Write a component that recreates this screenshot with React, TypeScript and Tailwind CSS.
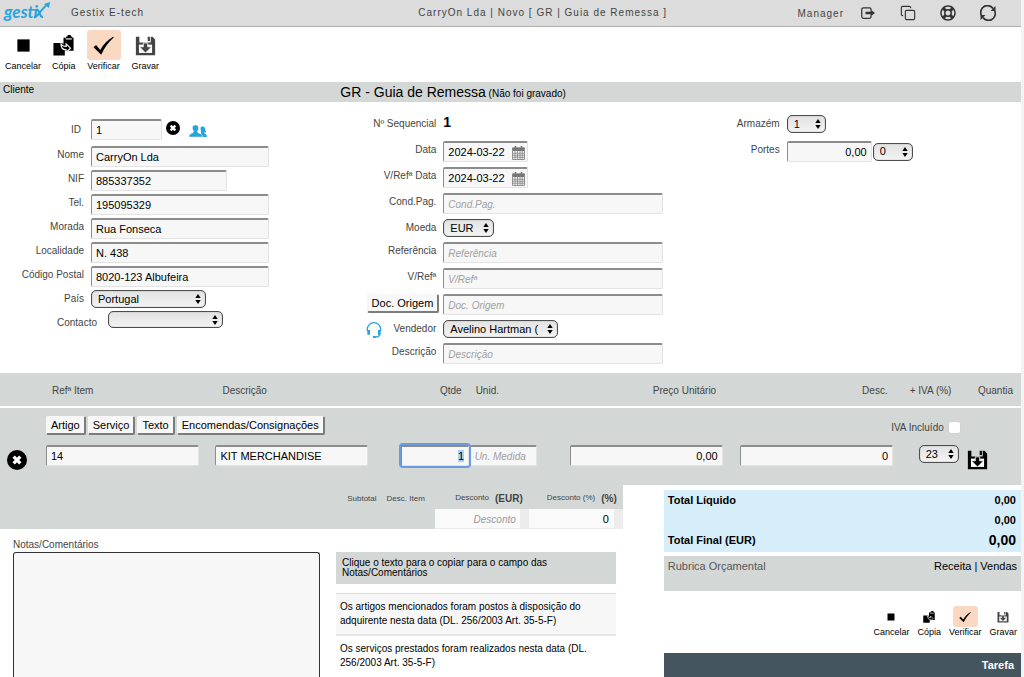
import React from "react";
import { Copy } from "lucide-react";
import { FaRegLifeRing } from "react-icons/fa";

const FIELD =
  "h-[21px] rounded-xs border border-t-2 border-t-[#8c8c8c] border-l-[#8c8c8c] border-r-[#e3e3e3] border-b-[#e3e3e3] bg-[#f7f7f7] px-1 text-[11px] text-black outline-none placeholder:text-[10px] placeholder:italic placeholder:text-[#a0a0a0] focus:ring-2 focus:ring-[#6a9be0] selection:bg-[#a9d0f8] selection:text-black";

const RAISED =
  "rounded-xs border border-r-2 border-b-2 border-t-[#f7f7f7] border-l-[#f7f7f7] border-r-[#7c7c7c] border-b-[#7c7c7c] bg-[#f7f7f7] text-[11px] leading-4 text-black whitespace-nowrap";

function StopIcon() {
  return (
    <svg viewBox="0 0 24 24" className="size-full">
      <rect x="5" y="5" width="14" height="14" fill="#000" />
    </svg>
  );
}

function PasteIcon() {
  return (
    <svg viewBox="0 0 24 24" className="size-full">
      <path d="M12 3h3V1.600h1.500a2 2 0 0 1 4 0H22V3h1.500v15H12z" fill="#000" />
      <path d="M14.500 4.500h7" stroke="#fff" strokeWidth="1.300" />
      <path d="M.5 9h10l3 3v11.500H.5z" fill="#000" />
      <path d="M9 9.500c1 3 3 3.500 6 3.500v-3l5 5-5 5v-3c-4 0-6-2-6-7.500z" fill="#000" stroke="#fff" strokeWidth="1.300" />
    </svg>
  );
}

function CheckIcon() {
  return (
    <svg viewBox="0 0 24 24" className="size-full">
      <path d="M.5 14 3.500 11.500 8.300 17C12 10.500 17 5.500 23 2l.7.900C17.500 8.500 13 14.500 9.400 22.500z" fill="#000" />
    </svg>
  );
}

function SaveIcon({ color }: { color: string }) {
  return (
    <svg viewBox="0 0 24 24" className="size-full">
      <path d="M1 2h4v6.500h13V2h2l3 3v18H1z" fill={color} />
      <path d="M14.500 2h2.500v5h-2.500z" fill={color} />
      <path d="M4.500 11h15v9.500h-15z" fill="#fff" />
      <path d="M9.500 9h5v4.500h4.500l-7 7-7-7h4.500z" fill={color} stroke="#fff" strokeWidth="0.900" />
    </svg>
  );
}

function RemoveIcon({ size }: { size: string }) {
  return (
    <svg viewBox="0 0 24 24" className={size}>
      <circle cx="12" cy="12" r="12" fill="#000" />
      <path d="m8 8 8 8m0-8-8 8" stroke="#fff" strokeWidth="4" />
    </svg>
  );
}

function ClientsIcon() {
  return (
    <svg viewBox="0 0 36 24" className="h-3 w-[18px]" fill="#29a3dc">
      <path d="M23 6c1-4 8-4 9 1 0 3 2 4 2 7-1 1-3 1-4 1.500 0 1.500 6 2 6 8.500H25z" />
      <path d="M13 0c5 0 6.500 3 6 7-.3 3-2 4.500-2 6.500C17 17 27 16 27 24H0c0-8 9-7 9-10.500 0-2-1.700-3.500-2-6.500C6.500 3 8 0 13 0z" stroke="#fff" strokeWidth="0.800" />
    </svg>
  );
}

function HeadsetIcon() {
  return (
    <svg viewBox="0 0 24 24" className="size-4" fill="none" stroke="#29a3dc" strokeWidth="2">
      <path d="M2 14v-3a10 10 0 0 1 20 0v3" />
      <path d="M4 12v7M20 12v7" strokeWidth="4" />
      <path d="M20.500 18c0 3-3 4.500-7 4.500" />
      <path d="M10.500 22.500h4" strokeWidth="3" />
    </svg>
  );
}

function CalendarIcon() {
  return (
    <svg viewBox="0 0 26 28" className="h-[14px] w-[13px]">
      <path d="M1 4h24v23H1z" fill="#eee" stroke="#777" strokeWidth="1.500" />
      <path d="M1 3h24v7H1z" fill="#777" />
      <path d="M7 0v5M19 0v5" stroke="#777" strokeWidth="3" />
      <path d="M1 14.500h24M1 18.500h24M1 22.500h24M6 10v17M11 10v17M16 10v17M20.500 10v17" stroke="#777" strokeWidth="1.300" />
    </svg>
  );
}

function ExitIcon() {
  return (
    <svg viewBox="0 0 28 24" className="h-3 w-[14px]" fill="none" stroke="#333" strokeWidth="2.500">
      <path d="M20 6V4.500A3 3 0 0 0 17 1.500H5A3.500 3.500 0 0 0 1.500 5v14A3.500 3.500 0 0 0 5 22.500h12a3 3 0 0 0 3-3V18" />
      <path d="M9 12h12" strokeWidth="5" />
      <path d="m19 5 9 7-9 7z" fill="#333" stroke="none" />
    </svg>
  );
}

function RefreshIcon() {
  return (
    <svg viewBox="0 0 32 32" className="size-4" fill="none" stroke="#333" strokeWidth="3.500">
      <path d="M2.500 20A13.500 13.500 0 0 1 26 7M29.500 12A13.500 13.500 0 0 1 6 25" />
      <path d="M31 2v10H21zM1 30V20h10z" fill="#333" stroke="none" />
    </svg>
  );
}

function Select({ id, options, size, label }: { id: string; options: string[]; size: string; label?: string }) {
  return (
    <span className={`relative inline-block ${size}`}>
      <select
        id={id}
        aria-label={label}
        className="block size-full appearance-none rounded-[5px] border border-[#4d4d4d] bg-linear-to-b from-[#e2e2e2] to-[#f3f3f3] pr-4 pl-[6px] text-[11px] leading-none text-black shadow-[inset_0_0_1px_#666]"
      >
        {options.map((o) => (
          <option key={o}>{o}</option>
        ))}
      </select>
      <svg viewBox="0 0 6 10" className="pointer-events-none absolute top-1 right-[5px] h-[10px] w-[6px]">
        <path d="M3 0l2.700 4H.3zM3 10L.3 6h5.400z" fill="#000" />
      </svg>
    </span>
  );
}

function Row({ id, label, labelWidth, height, children }: { id: string; label: string; labelWidth: string; height: string; children: React.ReactNode }) {
  return (
    <div className={`flex items-start gap-[7px] ${height}`}>
      <label htmlFor={id} className={`shrink-0 text-right leading-[18px] text-[#444] ${labelWidth}`}>
        {label}
      </label>
      {children}
    </div>
  );
}

function Toolbar({ small }: { small?: boolean }) {
  const actions = [
    { name: "Cancelar", icon: <StopIcon /> },
    { name: "Cópia", icon: <PasteIcon /> },
    { name: "Verificar", icon: <CheckIcon />, active: true },
    { name: "Gravar", icon: <SaveIcon color="#444" /> },
  ];

  return (
    <div className={small ? "flex justify-end gap-2 pr-1" : "flex gap-[11px] pl-[5px]"}>
      {actions.map((a) => (
        <button key={a.name} type="button" className="flex flex-col items-center text-[9px] leading-3 text-black">
          <span
            className={`flex items-center justify-center rounded-[3px] ${small ? "h-[21px]" : "h-[30px]"} ${a.active ? (small ? "w-[25px] bg-[#fbd8c2]" : "w-[34px] bg-[#fbd8c2]") : ""}`}
          >
            <span className={small ? "size-3" : "size-[21px]"}>{a.icon}</span>
          </span>
          <span className={small ? "leading-[10px]" : ""}>{a.name}</span>
        </button>
      ))}
    </div>
  );
}

const CLIENT_FIELDS = [
  { id: "nome", label: "Nome", value: "CarryOn Lda", width: "w-[178px]" },
  { id: "nif", label: "NIF", value: "885337352", width: "w-[136px]" },
  { id: "tel", label: "Tel.", value: "195095329", width: "w-[178px]" },
  { id: "morada", label: "Morada", value: "Rua Fonseca", width: "w-[178px]" },
  { id: "localidade", label: "Localidade", value: "N. 438", width: "w-[178px]" },
  { id: "postal", label: "Código Postal", value: "8020-123 Albufeira", width: "w-[178px]" },
];

function ClientForm() {
  return (
    <div className="pt-[17px]">
      <div className="flex h-[27px] items-start gap-[7px]">
        <label htmlFor="id" className="w-[81px] shrink-0 pt-[2px] text-right leading-[18px] text-[#444]">
          ID
        </label>
        <div className="flex items-start gap-1 pl-[3px]">
          <input id="id" defaultValue="1" className={`${FIELD} w-[71px]`} />
          <button type="button" aria-label="Limpar cliente" className="pt-[2px]">
            <RemoveIcon size="size-[14px]" />
          </button>
          <button type="button" aria-label="Procurar cliente" className="pt-[6px] pl-[5px]">
            <ClientsIcon />
          </button>
        </div>
      </div>
      {CLIENT_FIELDS.map((f) => (
        <Row key={f.id} id={f.id} label={f.label} labelWidth="w-[84px]" height="h-6">
          <input id={f.id} defaultValue={f.value} className={`${FIELD} ${f.width}`} />
        </Row>
      ))}
      <Row id="pais" label="País" labelWidth="w-[84px]" height="h-[21px]">
        <Select id="pais" options={["Portugal"]} size="h-[18px] w-[115px]" />
      </Row>
      <div className="flex items-start gap-[11px]">
        <label htmlFor="contacto" className="w-[97px] pt-[3px] text-right leading-[18px] text-[#444]">
          Contacto
        </label>
        <Select id="contacto" options={[""]} size="h-[17px] w-[115px]" />
      </div>
    </div>
  );
}

function DateField({ id }: { id: string }) {
  return (
    <span className="relative">
      <input id={id} defaultValue="2024-03-22" className={`${FIELD} w-[85px]`} />
      <button type="button" aria-label="Abrir calendário" className="absolute top-[5px] right-[3px]">
        <CalendarIcon />
      </button>
    </span>
  );
}

function DocumentForm() {
  return (
    <div className="pt-3">
      <div className="flex h-[27px] items-start gap-[7px]">
        <span className="w-24 pt-px text-right leading-[18px] text-[#444]">Nº Sequencial</span>
        <strong className="text-sm leading-4">1</strong>
      </div>
      <Row id="data" label="Data" labelWidth="w-24" height="h-[26px]">
        <DateField id="data" />
      </Row>
      <Row id="refdata" label="V/Refª Data" labelWidth="w-24" height="h-[26px]">
        <DateField id="refdata" />
      </Row>
      <Row id="condpag" label="Cond.Pag." labelWidth="w-24" height="h-[26px]">
        <input id="condpag" placeholder="Cond.Pag." className={`${FIELD} w-[220px]`} />
      </Row>
      <Row id="moeda" label="Moeda" labelWidth="w-24" height="h-[23px]">
        <Select id="moeda" options={["EUR"]} size="h-[18px] w-[51px]" />
      </Row>
      <Row id="referencia" label="Referência" labelWidth="w-24" height="h-[26px]">
        <input id="referencia" placeholder="Referência" className={`${FIELD} w-[220px]`} />
      </Row>
      <Row id="vref" label="V/Refª" labelWidth="w-24" height="h-[26px]">
        <input id="vref" placeholder="V/Refª" className={`${FIELD} w-[220px]`} />
      </Row>
      <div className="flex h-[26px] items-start gap-1">
        <div className="flex w-[99px] justify-end">
          <button type="button" className={`${RAISED} px-1`}>
            Doc. Origem
          </button>
        </div>
        <input aria-label="Doc. Origem" placeholder="Doc. Origem" className={`${FIELD} w-[220px]`} />
      </div>
      <div className="flex h-[23px] items-start gap-[7px]">
        <div className="flex w-24 items-start justify-end gap-3">
          <span className="pt-[2px]">
            <HeadsetIcon />
          </span>
          <label htmlFor="vendedor" className="leading-[18px] text-[#444]">
            Vendedor
          </label>
        </div>
        <Select id="vendedor" options={["Avelino Hartman ("]} size="h-[18px] w-[115px]" />
      </div>
      <Row id="descricao" label="Descrição" labelWidth="w-24" height="h-[30px]">
        <input id="descricao" placeholder="Descrição" className={`${FIELD} w-[220px]`} />
      </Row>
    </div>
  );
}

function ShippingForm() {
  return (
    <div className="pt-[13px]">
      <Row id="armazem" label="Armazém" labelWidth="w-[99px]" height="h-[26px]">
        <Select id="armazem" options={["1"]} size="h-[18px] w-[39px]" />
      </Row>
      <Row id="portes" label="Portes" labelWidth="w-[99px]" height="h-[26px]">
        <div className="flex items-center gap-px">
          <input id="portes" defaultValue="0,00" className={`${FIELD} w-[85px] text-right`} />
          <Select id="portes-iva" label="IVA dos portes" options={["0"]} size="h-[18px] w-10" />
        </div>
      </Row>
    </div>
  );
}

function ItemsTable() {
  return (
    <table className="w-full table-fixed border-collapse bg-[#d3d8d6]">
      <colgroup>
        <col className="w-[4.5%]" />
        <col className="w-[16.6%]" />
        <col className="w-[18%]" />
        <col className="w-[6.9%]" />
        <col className="w-[9.8%]" />
        <col className="w-[16.7%]" />
        <col className="w-[16.6%]" />
        <col className="w-[5.4%]" />
        <col className="w-[5.5%]" />
      </colgroup>
      <thead>
        <tr className="h-[34px] border-b-2 border-white text-left text-[#444] [&>th]:pt-[2px] [&>th]:font-normal [&>th]:whitespace-nowrap">
          <th></th>
          <th className="pl-[6px]">Refª Item</th>
          <th className="pl-[7px]">Descrição</th>
          <th className="pr-2 text-right">Qtde</th>
          <th className="pl-[6px]">Unid.</th>
          <th className="pr-6 text-right">Preço Unitário</th>
          <th className="pr-[22px] text-right">Desc.</th>
          <th>+ IVA (%)</th>
          <th className="pr-2 text-right">Quantia</th>
        </tr>
      </thead>
      <tbody>
        <tr className="h-[38px] align-top">
          <td></td>
          <td colSpan={5} className="pt-2">
            <div className="flex gap-[2px]">
              {["Artigo", "Serviço", "Texto", "Encomendas/Consignações"].map((b) => (
                <button key={b} type="button" className={`${RAISED} px-1`}>
                  {b}
                </button>
              ))}
            </div>
          </td>
          <td colSpan={2} className="pt-3 pr-1">
            <label className="flex items-center justify-end gap-1 leading-[15px] text-[#444]">
              IVA Incluído
              <input type="checkbox" className="size-[13px] appearance-none rounded-[3px] border border-[#d0d0d0] bg-white" />
            </label>
          </td>
          <td></td>
        </tr>
        <tr className="h-10 align-top">
          <td className="pt-[5px] pl-[7px]">
            <button type="button" aria-label="Remover linha" className="block">
              <RemoveIcon size="size-5" />
            </button>
          </td>
          <td>
            <input aria-label="Refª Item" defaultValue="14" className={`${FIELD} w-[153px]`} />
          </td>
          <td>
            <input aria-label="Descrição" defaultValue="KIT MERCHANDISE" className={`${FIELD} w-[153px]`} />
          </td>
          <td className="pl-[2px]">
            <input
              aria-label="Qtde"
              defaultValue="1"
              autoFocus
              onFocus={(e) => e.currentTarget.select()}
              className={`${FIELD} relative w-[68px] text-right`}
            />
          </td>
          <td>
            <input aria-label="Unid." placeholder="Un. Medida" className={`${FIELD} w-[67px]`} />
          </td>
          <td>
            <input aria-label="Preço Unitário" defaultValue="0,00" className={`${FIELD} w-[153px] text-right`} />
          </td>
          <td>
            <input aria-label="Desc." defaultValue="0" className={`${FIELD} w-[153px] text-right`} />
          </td>
          <td className="pl-[9px]">
            <Select id="iva" label="IVA" options={["23"]} size="h-[18px] w-10" />
          </td>
          <td className="pt-1 pl-[2px]">
            <button type="button" aria-label="Gravar linha" className="block size-[21px]">
              <SaveIcon color="#000" />
            </button>
          </td>
        </tr>
      </tbody>
    </table>
  );
}

function DiscountBar() {
  return (
    <div className="flex h-11 justify-end bg-[#d3d8d6] text-[8px] text-[#444]">
      <div className="flex gap-[10px] pt-2 pr-[10px] leading-3">
        <span>Subtotal</span>
        <span>Desc. Item</span>
      </div>
      <div className="w-[94px]">
        <label htmlFor="desconto" className="flex h-6 items-center justify-end gap-[6px] pr-[6px] pt-[2px]">
          Desconto <strong className="text-[10px]">(EUR)</strong>
        </label>
        <div className="h-5 bg-[#ececec]">
          <input
            id="desconto"
            placeholder="Desconto"
            className="block h-[19px] w-[85px] bg-[#fafafa] px-1 text-right text-[11px] text-black outline-none placeholder:text-[10px] placeholder:text-[#999] placeholder:italic"
          />
        </div>
      </div>
      <div className="w-[94px]">
        <label htmlFor="desconto-pct" className="flex h-6 items-center justify-end gap-[6px] pr-[6px] pt-[2px]">
          Desconto (%) <strong className="text-[10px]">(%)</strong>
        </label>
        <div className="h-5 bg-[#ececec]">
          <input
            id="desconto-pct"
            defaultValue="0"
            className="block h-[19px] w-[85px] bg-[#fafafa] px-[5px] text-right text-[11px] text-black outline-none"
          />
        </div>
      </div>
    </div>
  );
}

function Notes() {
  return (
    <div className="flex flex-1 items-stretch gap-4 pl-[13px]">
      <div className="flex w-[307px] flex-col">
        <label htmlFor="notas" className="pt-[9px] leading-[14px] text-[#444]">
          Notas/Comentários
        </label>
        <textarea
          id="notas"
          className="flex-1 resize-none rounded-t-[3px] border border-b-0 border-[#333] bg-[#f7f7f7] p-1 text-[11px] outline-none"
        />
      </div>
      <div className="w-[280px] pt-[23px] text-black">
        <h2 className="mb-[9px] h-8 bg-[#d3d8d6] px-[6px] pt-[6px] leading-[10px]">
          Clique o texto para o copiar para o campo das Notas/Comentários
        </h2>
        <button type="button" className="block w-full border-t border-b-2 border-t-[#ddd] border-b-[#e8e8e8] bg-[#f7f7f7] px-1 pt-[6px] pb-[6px] text-left leading-[14px]">
          Os artigos mencionados foram postos à disposição do adquirente nesta data (DL. 256/2003 Art. 35-5-F)
        </button>
        <button type="button" className="block w-full px-1 pt-[6px] pb-[6px] text-left leading-[14px]">
          Os serviços prestados foram realizados nesta data (DL. 256/2003 Art. 35-5-F)
        </button>
      </div>
    </div>
  );
}

function Totals() {
  return (
    <div className="flex flex-col pt-[5px] text-[11px] text-black">
      <dl className="h-[62px] bg-[#d6edfa] pr-[5px] pl-1 font-bold [&>div]:flex [&>div]:h-5 [&>div]:items-center [&>div]:justify-between">
        <div>
          <dt>Total Líquido</dt>
          <dd>0,00</dd>
        </div>
        <div>
          <dt></dt>
          <dd>0,00</dd>
        </div>
        <div>
          <dt>Total Final (EUR)</dt>
          <dd className="text-sm">0,00</dd>
        </div>
      </dl>
      <div className="mt-1 flex h-[35px] justify-between bg-[#d3d8d6] pt-[2px] pr-1 pl-1 leading-4">
        <span className="text-[#555]">Rubrica Orçamental</span>
        <span>Receita | Vendas</span>
      </div>
      <div className="pt-[15px] pb-4">
        <Toolbar small />
      </div>
      <div className="flex-1 bg-[#45555d] pr-[7px] text-right leading-6 font-bold text-white">Tarefa</div>
    </div>
  );
}

function Header() {
  return (
    <header className="flex h-[27px] items-center border-b border-[#b0b0b0] bg-[#dcdcdc] pr-[25px] tracking-[1px] text-[#444]">
      <div className="flex w-[42%] items-center gap-[21px] pl-1">
        <a href="#" className="relative flex w-[46px] pb-[2px] font-['Lato'] text-[17px] leading-5 font-bold tracking-normal text-[#29a3dc] italic">
          gesti
          <svg viewBox="0 0 18 20" className="absolute top-0 right-0 h-5 w-[18px]" fill="none" stroke="#29a3dc" strokeWidth="2">
            <path d="M4.500 7.500c4 0 2 8 6.500 7.500" />
            <path d="M2 15.500C6 15 9 7 15 3" />
            <path d="M18 0l-1 6-5-4z" fill="#29a3dc" stroke="none" />
          </svg>
        </a>
        <span className="pb-[2px]">Gestix E-tech</span>
      </div>
      <h1 className="pb-[2px]">CarryOn Lda | Novo [ GR | Guia de Remessa ]</h1>
      <div className="flex flex-1 items-center justify-end">
        <span className="pr-[17px]">Manager</span>
        <button type="button" aria-label="Sair" className="pr-[25px]">
          <ExitIcon />
        </button>
        <button type="button" aria-label="Duplicar janela" className="pr-6">
          <Copy size={16} strokeWidth={1.7} color="#333" />
        </button>
        <button type="button" aria-label="Ajuda" className="pr-6">
          <FaRegLifeRing size={16} color="#333" />
        </button>
        <button type="button" aria-label="Atualizar">
          <RefreshIcon />
        </button>
      </div>
    </header>
  );
}

export default function App() {
  return (
    <div className="min-h-screen bg-[#f3f3f3] pr-[3px] font-['Liberation_Sans',sans-serif] text-[10px]">
      <div className="flex min-h-screen flex-col bg-white">
        <Header />
        <div className="h-[55px] pt-[3px]">
          <Toolbar />
        </div>
        <div className="grid h-5 grid-cols-3 bg-[#d3d8d6] text-black">
          <span className="pl-[3px] leading-4">Cliente</span>
          <h2 className="col-span-2 leading-5">
            <span className="text-sm leading-5">GR - Guia de Remessa</span> (Não foi gravado)
          </h2>
        </div>
        <form className="grid grid-cols-3">
          <ClientForm />
          <DocumentForm />
          <ShippingForm />
        </form>
        <ItemsTable />
        <div className="grid flex-1 grid-cols-[61%_1fr] gap-x-[41px]">
          <div className="flex flex-col">
            <DiscountBar />
            <Notes />
          </div>
          <Totals />
        </div>
      </div>
    </div>
  );
}
